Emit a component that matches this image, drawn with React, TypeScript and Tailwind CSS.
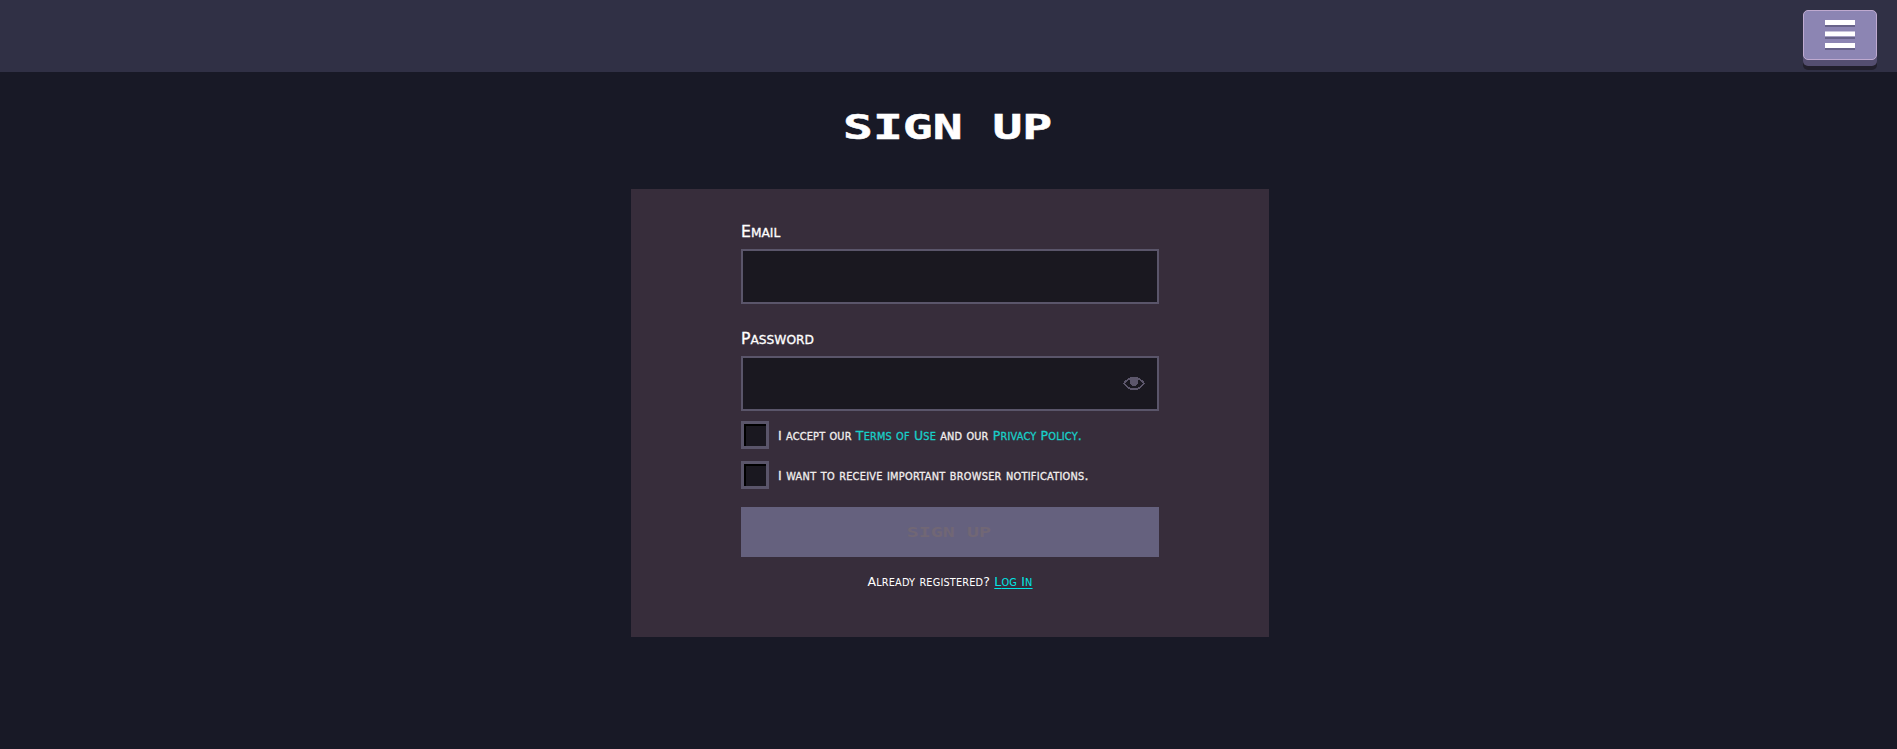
import React from "react";

const labelFont = "font-['DejaVu_Sans',sans-serif] whitespace-nowrap";

// Capitals keep the full size, lowercase letters become smaller capitals.
function SmallCaps({ children }: { children: string }) {
  return (
    <>
      {children.split(/([a-z]+)/).map((part, i) =>
        /^[a-z]+$/.test(part) ? (
          <span key={i} className="text-[0.78em] uppercase">{part}</span>
        ) : (
          part
        )
      )}
    </>
  );
}

function MenuButton() {
  return (
    <button
      aria-label="Menu"
      className="mr-5 mt-[10px] flex h-[50px] w-[74px] items-start justify-center rounded-[5px] border border-[#bfaad0] bg-[#8c85b3] pt-[9px] shadow-[0_6px_0_#544e70,0_10px_0_#211f2c]"
    >
      <svg width="30" height="30" viewBox="0 0 30 30" shapeRendering="crispEdges">
        <path d="M0 5h30v2H0zM0 17h30v2H0zM0 28h30v2H0z" fill="#68638a" />
        <path d="M0 11h30v1H0z" fill="#c9c5dc" />
        <path d="M0 0h30v5H0zM0 12h30v4H0zM0 23h30v5H0z" fill="#fff" />
        <path d="M0 16h30v1H0z" fill="#a5a0c3" />
      </svg>
    </button>
  );
}

function EyeIcon() {
  return (
    <svg width="22" height="13" viewBox="0 0 22 13" shapeRendering="crispEdges" fill="#5c566b">
      <path d="M7 0h8v1H7zM5 1h12v1H5zM4 2h3v1H4zM15 2h3v1h-3zM2 3h3v1H2zM17 3h3v1h-3zM1 4h3v1H1zM18 4h3v1h-3zM1 5h2v1H1zM19 5h2v1h-2zM0 6h2v1H0zM20 6h2v1h-2zM1 7h2v1H1zM19 7h2v1h-2zM2 8h2v1H2zM18 8h2v1h-2zM3 9h2v1H3zM17 9h2v1h-2zM4 10h3v1H4zM15 10h3v1h-3zM5 11h12v1H5zM7 12h8v1H7z" />
      <path d="M7 2h8v5h-1v1h-1v1H9V8H8V7H7z" />
    </svg>
  );
}

function Field({ label, type }: { label: string; type: string }) {
  return (
    <div className="flex flex-col">
      <label className={`${labelFont} h-[27px] text-[15.7px] leading-[19px] text-white [-webkit-text-stroke:0.3px]`}>
        <SmallCaps>{label}</SmallCaps>
      </label>
      <div className="flex h-[55px] items-center border-2 border-[#5a556a] bg-[#1a1820] pr-3">
        <input type={type} aria-label={label} className="h-full min-w-0 flex-1 bg-transparent px-3 text-white outline-none" />
        {type === "password" && <EyeIcon />}
      </div>
    </div>
  );
}

function CheckRow({ label, children }: { label: string; children: React.ReactNode }) {
  return (
    <div className="flex h-7 items-center">
      <span
        role="checkbox"
        aria-checked="false"
        aria-label={label}
        className="h-7 w-7 shrink-0 border-[3px] border-[#5a556a] bg-[#1a1820] shadow-[inset_2px_2px_0_#000]"
      />
      <span className={`${labelFont} ml-[9px] pt-[3px] text-[12.5px] leading-[20px] text-[#f1eded] [-webkit-text-stroke:0.3px]`}>{children}</span>
    </div>
  );
}

export default function App() {
  return (
    <div className="flex h-[749px] w-full flex-col overflow-hidden bg-[#181926]">
      <header className="flex h-[72px] w-full shrink-0 justify-end bg-[#303045]">
        <MenuButton />
      </header>

      <div className="flex flex-col items-center pl-[3px]">
        <h1 className="flex h-[117px] w-[638px] justify-center pr-[5px] pt-[35px] font-['DejaVu_Sans_Mono',monospace] text-[34px] font-bold leading-[40px] text-white [-webkit-text-stroke:0.5px]">
          <span className="inline-block h-10 origin-center scale-x-[1.46] whitespace-pre">SIGN UP</span>
        </h1>

        <main className="flex h-[448px] w-[638px] shrink-0 flex-col bg-[#372d3b] px-[110px] pt-[33px]">
          <Field label="Email" type="email" />
          <div className="mt-[25px]">
            <Field label="Password" type="password" />
          </div>
          <div className="mt-[10px] flex flex-col gap-3">
            <CheckRow label="Terms and privacy">
              <span className="tracking-[0.19px]">
                <SmallCaps>I accept our </SmallCaps>
                <span className="text-[#18cfc8]"><SmallCaps>Terms of Use</SmallCaps></span>
                <SmallCaps> and our </SmallCaps>
                <span className="text-[#18cfc8]"><SmallCaps>Privacy Policy.</SmallCaps></span>
              </span>
            </CheckRow>
            <CheckRow label="Notifications">
              <span className="tracking-[0.28px]">
                <SmallCaps>I want to receive important browser notifications.</SmallCaps>
              </span>
            </CheckRow>
          </div>
          <button
            disabled
            className="mt-[18px] flex h-[50px] w-full shrink-0 items-center justify-center bg-[#65617e] pr-[3px] font-['DejaVu_Sans_Mono',monospace] text-[13.7px] font-bold text-[#716775]"
          >
            <span className="inline-block scale-x-[1.46]">SIGN UP</span>
          </button>
          <p className={`${labelFont} mt-[15px] text-center text-[12.5px] leading-[20px] tracking-[0.18px] text-white`}>
            <SmallCaps>Already registered? </SmallCaps>
            <a href="#login" className="text-[#00e5e5] underline decoration-1 underline-offset-2"><SmallCaps>Log In</SmallCaps></a>
          </p>
        </main>
      </div>
    </div>
  );
}
